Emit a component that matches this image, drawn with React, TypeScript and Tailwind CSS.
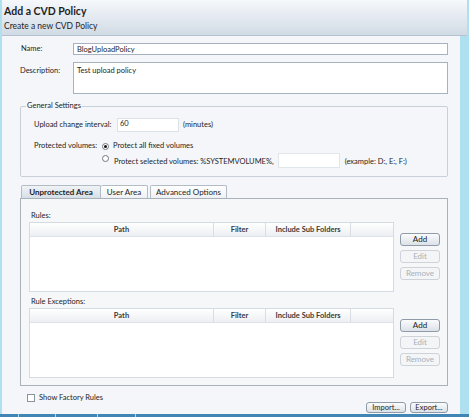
import React from "react";

const columns = [
  { label: "Path", w: "w-[184px]" },
  { label: "Filter", w: "w-[52px]" },
  { label: "Include Sub Folders", w: "w-[85px]" },
];

function RuleTable() {
  return (
    <div className="w-[365px] h-[70px] border border-[#d5dbe2] bg-white flex flex-col">
      <div className="h-[14px] flex bg-gradient-to-b from-white to-[#eceff3] border-b border-[#dde2e8]">
        {columns.map((c) => (
          <div
            key={c.label}
            className={`${c.w} border-r border-[#d8dde3] flex items-center justify-center text-[7.5px] font-bold text-[#3a3a3a]`}
          >
            {c.label}
          </div>
        ))}
        <div className="flex-1" />
      </div>
    </div>
  );
}

function SideButtons() {
  return (
    <div className="ml-[6px] pt-[11px] flex flex-col gap-[4px] w-[40px]">
      <button className="h-[13px] rounded-[3px] border border-[#8f9ba7] bg-gradient-to-b from-[#fafbfc] to-[#dce2e8] text-[8px] leading-[11px] text-[#222]">
        Add
      </button>
      <button className="h-[13px] rounded-[3px] border border-[#cdd3d9] bg-[#f3f5f7] text-[8px] leading-[11px] text-[#a9b1b9]">
        Edit
      </button>
      <button className="h-[13px] rounded-[3px] border border-[#cdd3d9] bg-[#f3f5f7] text-[8px] leading-[11px] text-[#a9b1b9]">
        Remove
      </button>
    </div>
  );
}

function Radio({ checked }: { checked?: boolean }) {
  return (
    <span className="w-[7px] h-[7px] rounded-full border border-[#6f7780] bg-white flex items-center justify-center shrink-0">
      {checked && <span className="w-[3px] h-[3px] rounded-full bg-[#111]" />}
    </span>
  );
}

export default function App() {
  return (
    <div className="w-[469px] h-[417px] bg-[#aee0f0] flex flex-col overflow-hidden font-['Lato','Liberation_Sans',sans-serif] text-[#1e1e1e] whitespace-nowrap">
      <div className="ml-[2px] mr-[2px] h-[36px] shrink-0 bg-gradient-to-b from-[#f6f8fb] to-[#d1dbe5] border-b border-[#b5c3d0] pl-[2px]">
        <div className="pt-[5px] text-[10.5px] leading-[12px] font-bold">Add a CVD Policy</div>
        <div className="mt-[4px] text-[8.5px] leading-[10px]">Create a new CVD Policy</div>
      </div>

      <div className="ml-[2px] mr-[9px] flex-1 bg-[#f4f6f9] pl-[18px] pr-[12px] flex flex-col text-[7.5px]">
        <div className="mt-[7px] flex items-center h-[12px]">
          <span className="w-[53px] shrink-0 pl-[1px]">Name:</span>
          <div className="flex-1 h-[12px] border border-[#a6b2bf] bg-white px-[3px] leading-[10px] pt-[1px]">
            BlogUploadPolicy
          </div>
        </div>

        <div className="mt-[7px] flex items-start">
          <span className="w-[53px] shrink-0 pt-[4px] leading-[10px]">Description:</span>
          <div className="flex-1 h-[32px] border border-[#a6b2bf] bg-white px-[3px] pt-[3px] leading-[10px]">
            Test upload policy
          </div>
        </div>

        <div className="mt-[12px] relative h-[71px] border border-[#c8d0d8] rounded-[2px] pl-[13px] pt-[11px]">
          <span className="absolute -top-[6px] left-[5px] bg-[#f4f6f9] px-[1px] leading-[10px]">
            General Settings
          </span>
          <div className="flex items-center h-[14px]">
            <span className="w-[83px] shrink-0">Upload change interval:</span>
            <div className="w-[62px] h-[14px] border border-[#dbe1e7] bg-white pl-[2px] leading-[9px]">60</div>
            <span className="ml-[4px]">(minutes)</span>
          </div>
          <div className="mt-[9px] flex items-center h-[10px]">
            <span className="w-[68px] shrink-0">Protected volumes:</span>
            <Radio checked />
            <span className="ml-[4px]">Protect all fixed volumes</span>
          </div>
          <div className="mt-[2px] flex items-start h-[15px]">
            <span className="w-[68px] shrink-0" />
            <span className="mt-[2px]">
              <Radio />
            </span>
            <span className="ml-[5px] mt-[4px] leading-[10px]">Protect selected volumes: %SYSTEMVOLUME%,</span>
            <div className="ml-[4px] w-[62px] h-[15px] border border-[#e1e6eb] bg-white" />
            <span className="ml-[5px] mt-[4px] leading-[10px]">(example: D:, E:, F:)</span>
          </div>
        </div>

        <div className="mt-[8px] h-[13px] flex items-end pl-[1px] text-[8px]">
          <div className="w-[80px] h-[13px] border border-b-0 border-[#b3bcc5] rounded-t-[2px] bg-gradient-to-b from-[#f0f3f6] to-[#d6dfe8] flex items-center justify-center font-bold">
            Unprotected Area
          </div>
          <div className="w-[47px] h-[13px] border border-b-0 border-l-0 border-[#b3bcc5] rounded-t-[2px] bg-gradient-to-b from-white to-[#eef1f4] flex items-center justify-center">
            User Area
          </div>
          <div className="ml-[2px] w-[77px] h-[13px] border border-b-0 border-[#b3bcc5] rounded-t-[2px] bg-gradient-to-b from-white to-[#eef1f4] flex items-center justify-center">
            Advanced Options
          </div>
        </div>

        <div className="h-[188px] border border-[#a9b2bb] bg-[#f6f7f9] pl-[8px] pt-[12px] flex flex-col">
          <div className="ml-[2px] leading-[10px]">Rules:</div>
          <div className="mt-[1px] flex">
            <RuleTable />
            <SideButtons />
          </div>
          <div className="ml-[2px] mt-[5px] leading-[10px]">Rule Exceptions:</div>
          <div className="mt-[1px] flex">
            <RuleTable />
            <SideButtons />
          </div>
        </div>

        <div className="flex-1 flex">
          <div className="mt-[7px] ml-[7px] flex items-center h-[10px] self-start">
            <span className="w-[8px] h-[8px] border border-[#8a949e] bg-white" />
            <span className="ml-[4px]">Show Factory Rules</span>
          </div>
          <div className="ml-auto mt-[16px] flex gap-[4px] self-start">
            <button className="w-[40px] h-[11px] rounded-[3px] border border-[#8f9ba7] bg-gradient-to-b from-[#fafbfc] to-[#dce2e8] text-[7.5px] leading-[9px]">
              Import...
            </button>
            <button className="w-[38px] h-[11px] rounded-[3px] border border-[#8f9ba7] bg-gradient-to-b from-[#fafbfc] to-[#dce2e8] text-[7.5px] leading-[9px]">
              Export...
            </button>
          </div>
        </div>
      </div>

      <div className="h-[3px] shrink-0 bg-[#3f86b4] flex">
        <span className="ml-[18px] w-[1px] bg-[#a8d4ea]" />
        <span className="ml-[36px] w-[1px] bg-[#a8d4ea]" />
        <span className="ml-[41px] w-[1px] bg-[#a8d4ea]" />
        <span className="ml-[37px] w-[1px] bg-[#a8d4ea]" />
      </div>
    </div>
  );
}
